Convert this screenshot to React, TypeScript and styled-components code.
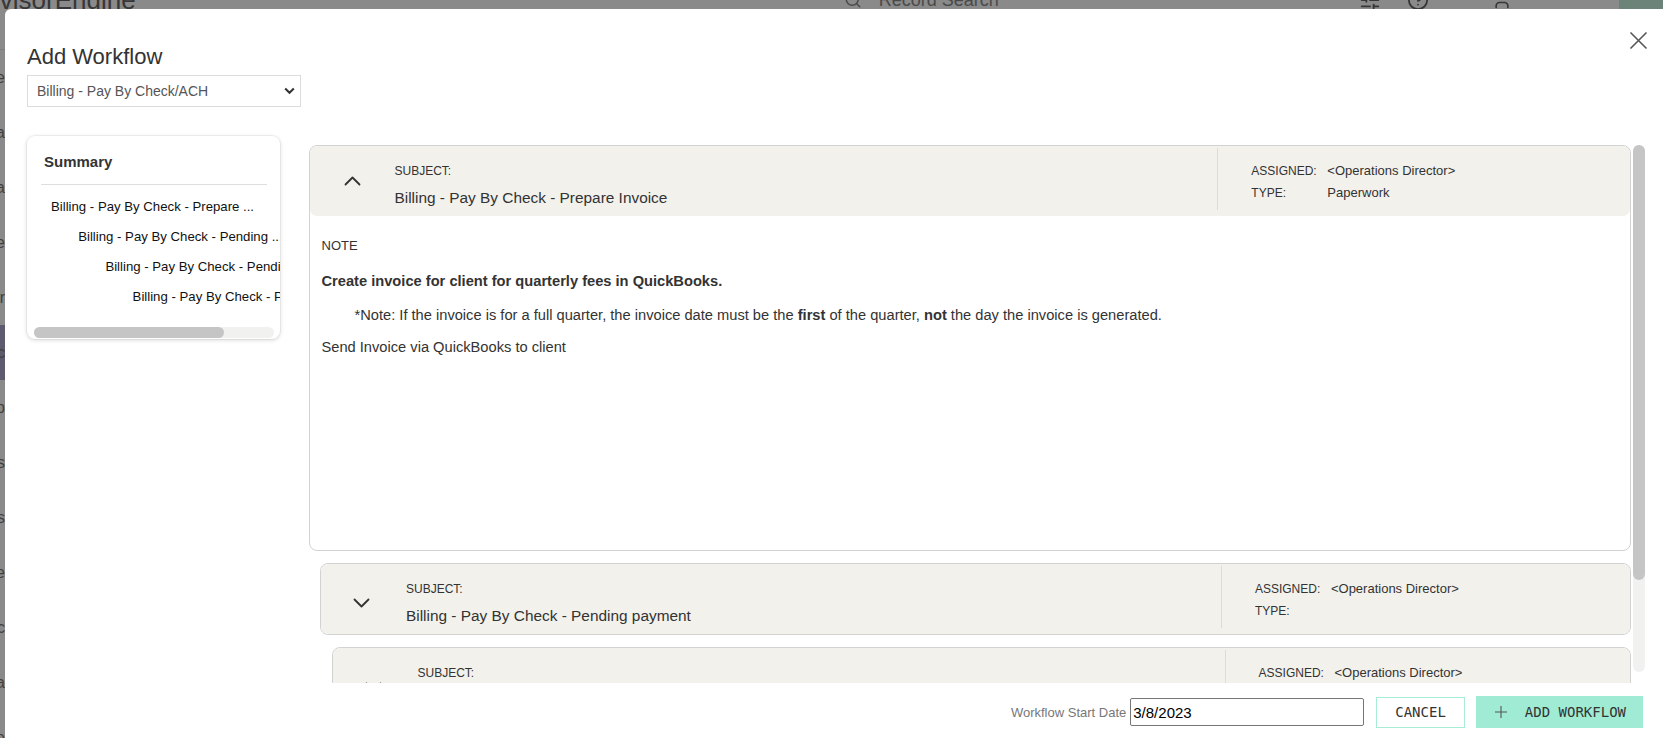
import React from "react";
import styled, { createGlobalStyle } from "styled-components";
import { Search, SlidersHorizontal, CircleHelp, User } from "lucide-react";

const GlobalStyle = createGlobalStyle`
  html, body { margin: 0; padding: 0; height: 100%; overflow: hidden; }
  body { font-family: "Liberation Sans", Arial, sans-serif; background: #fff; color: #333; }
  * { box-sizing: border-box; }
`;

/* ---------- background page (dimmed by the overlay) ---------- */
const Page = styled.div`
  position: fixed;
  inset: 0;
  background: #fff;
  display: flex;
  flex-direction: column;
  overflow: hidden;
`;
const TopBar = styled.header`
  height: 50px;
  flex-shrink: 0;
  display: flex;
  align-items: flex-start;
  border-bottom: 1px solid #e6e6e6;
  overflow: hidden;
`;
const TopRow = styled.div`
  margin-top: -15px;
  height: 30px;
  width: 100%;
  display: flex;
  align-items: center;
  color: #6a6a6a;
  white-space: nowrap;
  & > * { flex-shrink: 0; }
`;
const Logo = styled.div`
  font-size: 26px;
  line-height: 30px;
  margin-left: -32px;
  color: #666;
`;
const RecordSearch = styled.div`
  margin-left: 708px;
  display: flex;
  align-items: center;
  gap: 17px;
  font-size: 18px;
  color: #8a8a8a;
`;
const TopIcon = styled.div<{ $ml: number }>`
  margin-left: ${(p) => p.$ml}px;
  display: flex;
  color: #666;
`;
const TopAction = styled.div`
  margin-left: 107px;
  width: 50px;
  height: 30px;
  background: #c8f2e2;
`;
const Shell = styled.div`
  flex: 1;
  display: flex;
`;
const Sidebar = styled.nav`
  width: 120px;
  margin-left: -115px;
  display: flex;
  flex-direction: column;
`;
const NavItem = styled.div<{ $active?: boolean }>`
  height: 55px;
  line-height: 55px;
  text-align: right;
  font-size: 16px;
  color: #777;
  white-space: nowrap;
  background: ${(p) => (p.$active ? "#aea8cb" : "transparent")};
`;
const Backdrop = styled.div`
  position: fixed;
  inset: 0;
  background: rgba(0, 0, 0, 0.46);
`;

/* ---------- modal ---------- */
const Modal = styled.div`
  position: fixed;
  top: 9px;
  left: 5px;
  right: -8px;
  bottom: -8px;
  background: #fff;
  border-radius: 6px;
  display: flex;
  flex-direction: column;
  padding: 35px 26px 18px 22px;
`;
const CloseButton = styled.button`
  position: absolute;
  top: 22px;
  right: 23px;
  width: 19px;
  height: 19px;
  padding: 0;
  border: none;
  background: transparent;
  display: flex;
  cursor: pointer;
`;
const Title = styled.h1`
  margin: 0;
  font-size: 22px;
  line-height: 26px;
  font-weight: 400;
  color: #333;
`;
const SelectWrap = styled.div`
  position: relative;
  width: 274px;
  height: 32px;
  margin-top: 5px;
`;
const Select = styled.select`
  appearance: none;
  width: 100%;
  height: 100%;
  border: 1px solid #dcdcdc;
  border-radius: 0;
  background: #fff;
  padding: 0 30px 0 9px;
  font-family: "Liberation Sans", Arial, sans-serif;
  font-size: 14px;
  color: #555;
  outline: none;
`;
const SelectArrow = styled.svg`
  position: absolute;
  right: 6px;
  top: 12px;
  pointer-events: none;
`;
const Body = styled.div`
  flex: 1;
  min-height: 0;
  display: flex;
  gap: 28.5px;
  margin-top: 29px;
`;

/* ---------- shared scrollbars ---------- */
const ScrollTrack = styled.div<{ $horizontal?: boolean }>`
  flex-shrink: 0;
  display: flex;
  background: #f1f1ef;
  border-radius: 6px;
  ${(p) =>
    p.$horizontal
      ? "height: 11px; margin: 0 6px 0 7px;"
      : "width: 12px; margin-bottom: 11px; flex-direction: column;"}
`;
const ScrollThumb = styled.div<{ $horizontal?: boolean; $size: number }>`
  background: #c5c5c5;
  border-radius: 6px;
  ${(p) => (p.$horizontal ? `width: ${p.$size}px;` : `height: ${p.$size}px;`)}
`;

/* ---------- summary ---------- */
const SummaryCard = styled.aside`
  width: 253px;
  align-self: flex-start;
  background: #fff;
  border-radius: 8px;
  box-shadow: 0 0 0 1px rgba(0, 0, 0, 0.04), 0 1px 4px rgba(0, 0, 0, 0.16);
  padding-bottom: 1px;
  overflow: hidden;
`;
const SummaryTitle = styled.h2`
  margin: 0 13px 0 14px;
  padding: 17px 0 14px 3px;
  font-size: 15px;
  line-height: 17px;
  font-weight: 700;
  color: #333;
  border-bottom: 1px solid #dedede;
`;
const SummaryList = styled.div`
  margin: 0 0 0 7px;
  padding: 7px 0 15px;
  overflow: hidden;
`;
const SummaryItem = styled.div<{ $depth: number }>`
  margin-left: ${(p) => 17 + p.$depth * 27.2}px;
  font-size: 13.2px;
  line-height: 30px;
  color: #111;
  white-space: nowrap;
`;

/* ---------- steps ---------- */
const MainColumn = styled.section`
  flex: 1;
  min-width: 0;
  display: flex;
  padding-top: 9px;
`;
const StepViewport = styled.div`
  flex: 1;
  min-width: 0;
  overflow: hidden;
  padding-right: 2px;
  display: flex;
  flex-direction: column;
  gap: 12px;
`;
const StepCard = styled.article<{ $depth: number }>`
  flex-shrink: 0;
  margin-left: ${(p) => p.$depth * 11.5}px;
  border: 1px solid #d2d2d2;
  border-radius: 8px;
  background: #fff;
  overflow: hidden;
`;
const StepHeader = styled.header`
  height: 70px;
  display: flex;
  background: #f2f1ec;
  border-radius: 7px;
`;
const HeaderMain = styled.div`
  width: 68.75%;
  display: flex;
`;
const ChevronCell = styled.button<{ $open: boolean }>`
  width: 85px;
  flex-shrink: 0;
  border: none;
  background: transparent;
  padding: ${(p) => (p.$open ? "0" : "8px 4px 0 0")};
  display: flex;
  align-items: center;
  justify-content: center;
  cursor: pointer;
`;
const SubjectBlock = styled.div`
  padding-top: 17px;
`;
const SmallLabel = styled.div`
  font-size: 12px;
  line-height: 16px;
  text-transform: uppercase;
  color: #333;
`;
const SubjectText = styled.div`
  margin-top: 10px;
  font-size: 15.4px;
  line-height: 18px;
  color: #333;
`;
const HeaderMeta = styled.div`
  flex: 1;
  margin: 2px 0 6px;
  border-left: 1px solid #dcdcd8;
  padding: 15px 0 0 33px;
  display: grid;
  grid-template-columns: 76px auto;
  grid-auto-rows: 16px;
  row-gap: 6px;
  align-content: start;
`;
const MetaValue = styled.div`
  font-size: 13px;
  line-height: 16px;
  color: #333;
`;
const StepBody = styled.div`
  height: 334px;
  padding: 21px 12px 0;
`;
const NoteLabel = styled.div`
  font-size: 13px;
  line-height: 18px;
  color: #333;
`;
const NoteLine = styled.p<{ $indent?: boolean; $bold?: boolean; $gap: number }>`
  margin: ${(p) => p.$gap}px 0 0;
  padding-left: ${(p) => (p.$indent ? 33 : 0)}px;
  font-size: 14.667px;
  line-height: 20px;
  font-weight: ${(p) => (p.$bold ? 700 : 400)};
  color: #333;
`;

/* ---------- footer ---------- */
const Footer = styled.footer`
  display: flex;
  justify-content: flex-end;
  align-items: center;
  margin: 13px 2px 0 0;
  height: 32px;
`;
const DateLabel = styled.label`
  font-size: 13px;
  color: #777;
  margin-right: 4px;
`;
const DateInput = styled.input`
  width: 234px;
  height: 28px;
  border: 1px solid #767676;
  border-radius: 2px;
  padding: 1px 2px;
  font-family: "Liberation Sans", Arial, sans-serif;
  font-size: 15px;
  color: #000;
  outline: none;
`;
const Button = styled.button<{ $primary?: boolean }>`
  height: ${(p) => (p.$primary ? 32 : 31)}px;
  margin-left: ${(p) => (p.$primary ? 11 : 12)}px;
  padding: ${(p) => (p.$primary ? "0 17px 0 19px" : "0 18px")};
  display: flex;
  align-items: center;
  gap: 18px;
  border: ${(p) => (p.$primary ? "none" : "1px solid #a6ecd6")};
  background: ${(p) => (p.$primary ? "#a0ebd3" : "#fff")};
  font-family: "DejaVu Sans Mono", "Liberation Mono", monospace;
  font-size: 14px;
  color: #333;
  cursor: pointer;
`;

const steps = [
  { subject: "Billing - Pay By Check - Prepare Invoice", assigned: "<Operations Director>", type: "Paperwork" },
  { subject: "Billing - Pay By Check - Pending payment", assigned: "<Operations Director>", type: "" },
  { subject: "Billing - Pay By Check - Pending payment follow up", assigned: "<Operations Director>", type: "" },
  { subject: "Billing - Pay By Check - Payment received", assigned: "<Operations Director>", type: "" },
];

const shorten = (s: string) => (s.length > 33 ? s.slice(0, 33) + "..." : s);

const navItems = ["Home", "Data", "Agenda", "Schedule", "Tracker", "Sync", "Setup", "Clients", "Accounts", "Archive", "Generic", "Media", "More"];

const Chevron = ({ up }: { up: boolean }) => (
  <svg width="17" height="10" viewBox="0 0 17 10" fill="none">
    <polyline
      points={up ? "1.5,8.5 8.5,1.5 15.5,8.5" : "1.5,1.5 8.5,8.5 15.5,1.5"}
      stroke="#333"
      strokeWidth="1.8"
      strokeLinecap="round"
      strokeLinejoin="round"
    />
  </svg>
);

export default function App() {
  return (
    <>
      <GlobalStyle />
      <Page>
        <TopBar>
          <TopRow>
            <Logo>AdvisorEngine</Logo>
            <RecordSearch>
              <Search size={18} strokeWidth={2} />
              <span>Record Search</span>
            </RecordSearch>
            <TopIcon $ml={360}><SlidersHorizontal size={22} /></TopIcon>
            <TopIcon $ml={26}><CircleHelp size={22} /></TopIcon>
            <TopIcon $ml={63}><User size={20} /></TopIcon>
            <TopAction />
          </TopRow>
        </TopBar>
        <Shell>
          <Sidebar>
            {navItems.map((n, i) => (
              <NavItem key={n} $active={i === 5}>{n}</NavItem>
            ))}
          </Sidebar>
        </Shell>
      </Page>
      <Backdrop />
      <Modal>
        <CloseButton aria-label="Close">
          <svg width="19" height="19" viewBox="0 0 19 19">
            <path d="M1.5 1.5 L17.5 17.5 M17.5 1.5 L1.5 17.5" stroke="#555" strokeWidth="1.6" />
          </svg>
        </CloseButton>
        <Title>Add Workflow</Title>
        <SelectWrap>
          <Select defaultValue="check">
            <option value="check">Billing - Pay By Check/ACH</option>
          </Select>
          <SelectArrow width="11" height="8" viewBox="0 0 11 8">
            <polyline points="1.2,1.5 5.5,5.8 9.8,1.5" fill="none" stroke="#333" strokeWidth="2" />
          </SelectArrow>
        </SelectWrap>
        <Body>
          <SummaryCard>
            <SummaryTitle>Summary</SummaryTitle>
            <SummaryList>
              {steps.map((s, i) => (
                <SummaryItem key={i} $depth={i}>{shorten(s.subject)}</SummaryItem>
              ))}
            </SummaryList>
            <ScrollTrack $horizontal>
              <ScrollThumb $horizontal $size={190} />
            </ScrollTrack>
          </SummaryCard>
          <MainColumn>
            <StepViewport>
              {steps.map((s, i) => (
                <StepCard key={i} $depth={i}>
                  <StepHeader>
                    <HeaderMain>
                      <ChevronCell $open={i === 0} aria-label="Toggle"><Chevron up={i === 0} /></ChevronCell>
                      <SubjectBlock>
                        <SmallLabel>Subject:</SmallLabel>
                        <SubjectText>{s.subject}</SubjectText>
                      </SubjectBlock>
                    </HeaderMain>
                    <HeaderMeta>
                      <SmallLabel>Assigned:</SmallLabel>
                      <MetaValue>{s.assigned}</MetaValue>
                      <SmallLabel>Type:</SmallLabel>
                      <MetaValue>{s.type}</MetaValue>
                    </HeaderMeta>
                  </StepHeader>
                  {i === 0 && (
                    <StepBody>
                      <NoteLabel>NOTE</NoteLabel>
                      <NoteLine $bold $gap={16}>Create invoice for client for quarterly fees in QuickBooks.</NoteLine>
                      <NoteLine $indent $gap={14}>
                        *Note: If the invoice is for a full quarter, the invoice date must be the <b>first</b> of the quarter, <b>not</b> the day the invoice is generated.
                      </NoteLine>
                      <NoteLine $gap={12}>Send Invoice via QuickBooks to client</NoteLine>
                    </StepBody>
                  )}
                </StepCard>
              ))}
            </StepViewport>
            <ScrollTrack>
              <ScrollThumb $size={435} />
            </ScrollTrack>
          </MainColumn>
        </Body>
        <Footer>
          <DateLabel htmlFor="start">Workflow Start Date</DateLabel>
          <DateInput id="start" defaultValue="3/8/2023" />
          <Button>CANCEL</Button>
          <Button $primary>
            <svg width="12" height="12" viewBox="0 0 12 12">
              <path d="M6 0 V12 M0 6 H12" stroke="#555" strokeWidth="1.1" />
            </svg>
            ADD WORKFLOW
          </Button>
        </Footer>
      </Modal>
    </>
  );
}
